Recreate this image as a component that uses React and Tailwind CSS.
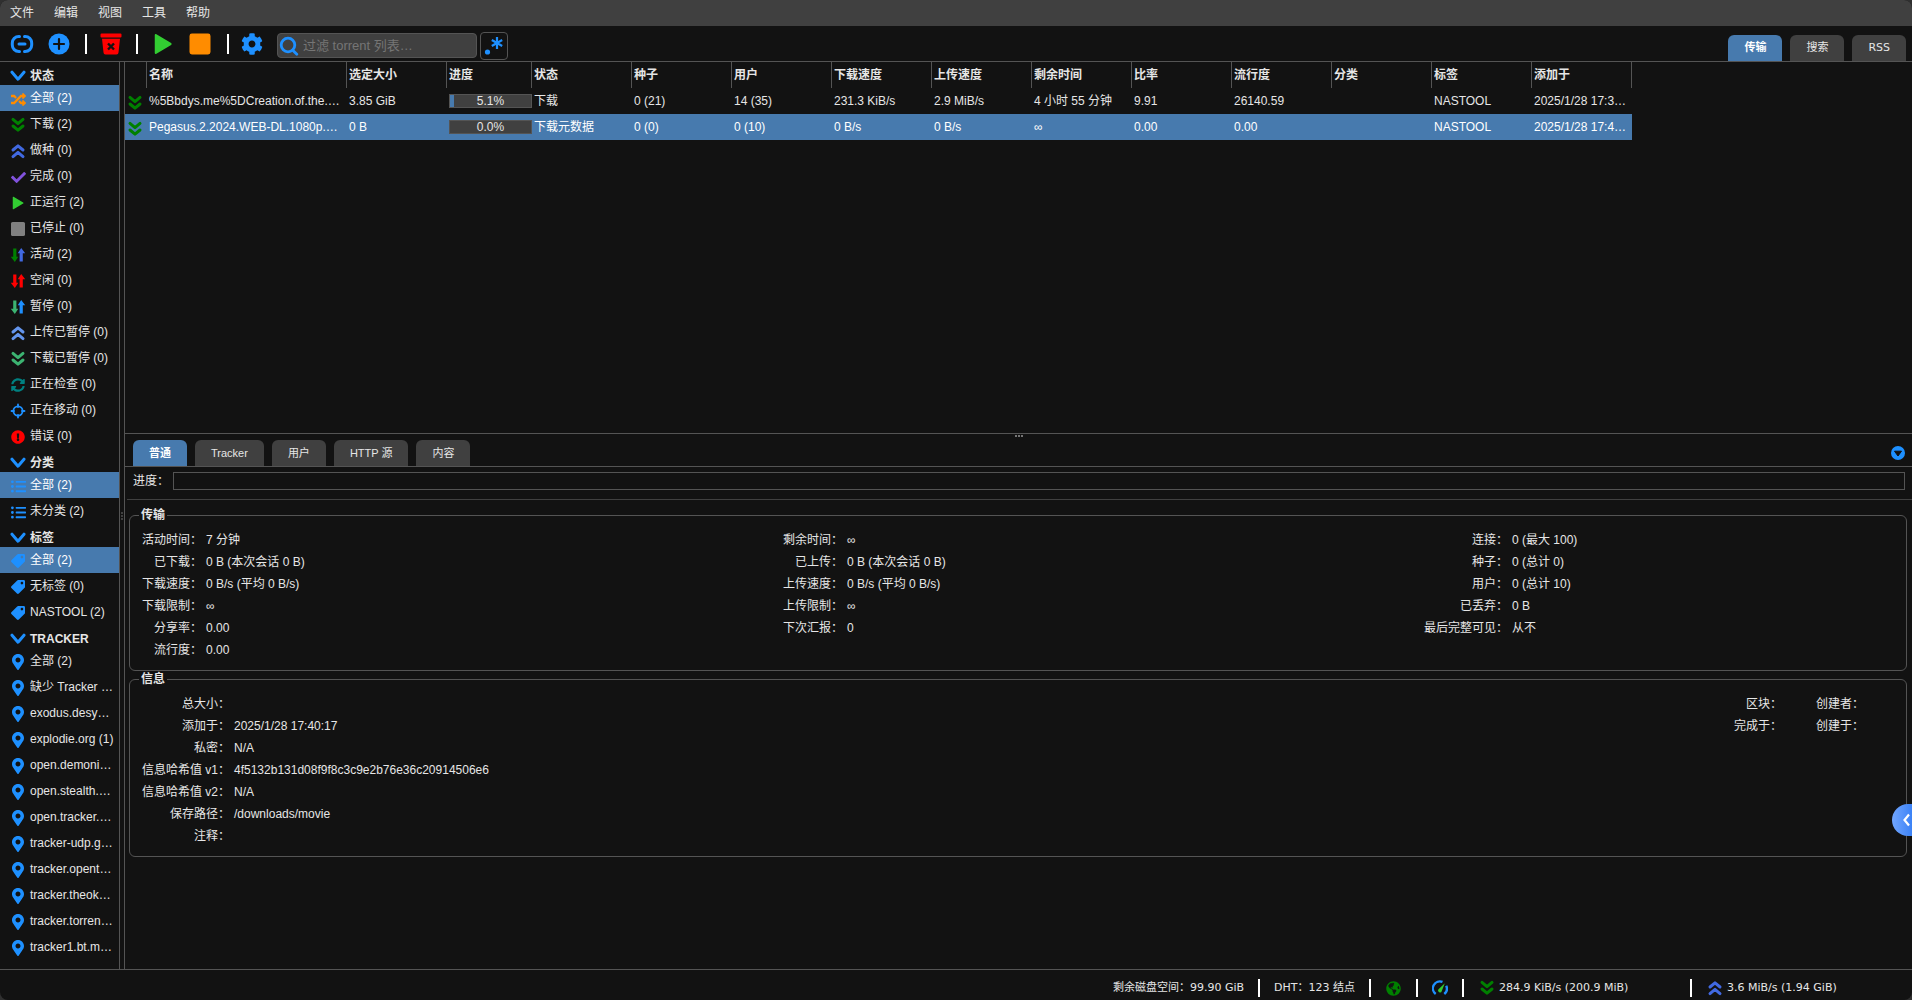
import { useState } from "react";
import clsx from "clsx";
import {
  FaCheck,
  FaCog,
  FaExclamationCircle,
  FaGlobeAmericas,
  FaListUl,
  FaMapMarkerAlt,
  FaRandom,
  FaSyncAlt,
  FaTag,
} from "react-icons/fa";

function Chevron() {
  return (
    <svg viewBox="0 0 16 16" className="size-4 shrink-0 text-[#1e90ff]" fill="none" stroke="currentColor" strokeWidth="3">
      <path d="M2 4.2 8 11.2l6-7" strokeLinecap="round" strokeLinejoin="round" />
    </svg>
  );
}

function DoubleDown({ className }) {
  return (
    <svg viewBox="0 0 16 16" className={clsx("size-4 shrink-0", className)} fill="none" stroke="currentColor" strokeWidth="3">
      <path d="M3 2.4 8 6.6l5-4.2M3 9l5 4.2L13 9" strokeLinecap="round" strokeLinejoin="round" />
    </svg>
  );
}

function DoubleUp({ className }) {
  return (
    <svg viewBox="0 0 16 16" className={clsx("size-4 shrink-0", className)} fill="none" stroke="currentColor" strokeWidth="3">
      <path d="M3 7 8 2.8 13 7M3 13.6 8 9.4l5 4.2" strokeLinecap="round" strokeLinejoin="round" />
    </svg>
  );
}

function Play({ className }) {
  return (
    <svg viewBox="0 0 16 16" className={clsx("shrink-0", className)} fill="currentColor">
      <path d="M2 1.4c0-.5.5-.8.9-.6l11 6.5c.5.3.5 1.100 0 1.400l-11 6.500c-.4.2-.9-.1-.9-.6z" />
    </svg>
  );
}

function Square({ className }) {
  return (
    <svg viewBox="0 0 16 16" className={clsx("shrink-0", className)} fill="currentColor">
      <rect x="1" y="1" width="14" height="14" rx="1.6" />
    </svg>
  );
}

function UpDown({ down, up }) {
  return (
    <svg viewBox="0 0 16 16" className="size-4 shrink-0">
      <path className={down} fill="currentColor" d="M3.2 1.500h3.200v8.300h1.900L4.800 15 .8 9.800h2.400z" />
      <path className={up} fill="currentColor" d="M9.600 14.500h3.200V6.200h2.400L11.200 1 7.700 6.200h1.900z" />
    </svg>
  );
}

function Crosshair() {
  return (
    <svg viewBox="0 0 16 16" className="size-4 shrink-0 text-[#1e90ff]" fill="none" stroke="currentColor" strokeWidth="1.8">
      <circle cx="8" cy="8" r="4.6" />
      <path d="M8 1.500v2.500M8 12v2.500M1.500 8h2.500M12 8h2.500" strokeLinecap="round" />
    </svg>
  );
}

function Link() {
  return (
    <svg viewBox="0 0 24 24" className="size-6" fill="none" stroke="#1e90ff" strokeWidth="3">
      <path d="M9.500 4.500H8.800a6.500 6.500 0 0 0-6.500 6.500v2a6.500 6.500 0 0 0 6.500 6.500h.7M14.500 4.500h.7a6.500 6.500 0 0 1 6.500 6.500v2a6.500 6.500 0 0 1-6.500 6.500h-.7M9 12h6" strokeLinecap="round" />
    </svg>
  );
}

function AddCircle() {
  return (
    <svg viewBox="0 0 22 22" className="size-[22px]">
      <circle cx="11" cy="11" r="10.5" fill="#1e90ff" />
      <path d="M11 6v10M6 11h10" stroke="#121212" strokeWidth="2.2" strokeLinecap="round" />
    </svg>
  );
}

function Trash() {
  return (
    <svg viewBox="0 0 22 22" className="size-[22px]">
      <path d="M1.500.5h19a1 1 0 0 1 1 1v2a1 1 0 0 1-1 1h-19a1 1 0 0 1-1-1v-2a1 1 0 0 1 1-1z" fill="red" />
      <path d="M2 5.800h18l-1.500 13.700a2 2 0 0 1-2 1.900h-11a2 2 0 0 1-2-1.900z" fill="red" />
      <path d="m8 10.500 6 6M14 10.500l-6 6" stroke="#121212" strokeWidth="2.4" />
    </svg>
  );
}

function Search() {
  return (
    <svg viewBox="0 0 20 20" className="size-5 shrink-0" fill="none" stroke="#1e90ff" strokeWidth="2.8" strokeLinecap="round">
      <circle cx="9" cy="9" r="6.8" />
      <path d="m14 14.500 3.800 3.800" />
    </svg>
  );
}

function Regex() {
  return (
    <svg viewBox="0 0 20 20" className="size-5">
      <circle cx="3.5" cy="16" r="2.6" fill="#1e90ff" />
      <path d="M13 1v12M7.800 4l10.400 6M18.200 4 7.800 10" stroke="#1e90ff" strokeWidth="2.2" />
    </svg>
  );
}

function Gauge() {
  return (
    <svg viewBox="0 0 16 16" className="size-4" fill="none">
      <path d="M3.700 14A7 7 0 0 1 10.500 1.900M12.300 14a7 7 0 0 0 1.900-8.300" stroke="#1e90ff" strokeWidth="2.4" />
      <path d="M12.800 3.200 9.800 11a1.900 1.900 0 1 1-3.500-1.400z" fill="#32cd32" />
    </svg>
  );
}

function Collapse() {
  return (
    <svg viewBox="0 0 14 14" className="size-[14px]">
      <circle cx="7" cy="7" r="7" fill="#1e90ff" />
      <path d="M3.500 5.200h7L7 10z" fill="#121212" stroke="#121212" strokeLinejoin="round" />
    </svg>
  );
}

const pin = <FaMapMarkerAlt className="size-4 text-[#1e90ff]" />;
const tag = <FaTag className="size-[14px] -scale-x-100 text-[#1e90ff]" />;
const list = <FaListUl className="size-[15px] text-[#1e90ff]" />;

const sections = [
  {
    title: "状态",
    selected: 0,
    items: [
      ["全部 (2)", <FaRandom className="size-[15px] text-[#ff8c00]" />],
      ["下载 (2)", <DoubleDown className="text-[#008000]" />],
      ["做种 (0)", <DoubleUp className="text-[#4169e1]" />],
      ["完成 (0)", <FaCheck className="size-[15px] text-[#8152dc]" />],
      ["正运行 (2)", <Play className="size-[14px] text-[#32cd32]" />],
      ["已停止 (0)", <Square className="size-4 text-[#808080]" />],
      ["活动 (2)", <UpDown down="text-[#008000]" up="text-[#4169e1]" />],
      ["空闲 (0)", <UpDown down="text-[#ff0000]" up="text-[#ff0000]" />],
      ["暂停 (0)", <UpDown down="text-[#3cb371]" up="text-[#1e90ff]" />],
      ["上传已暂停 (0)", <DoubleUp className="text-[#6495ed]" />],
      ["下载已暂停 (0)", <DoubleDown className="text-[#3cb371]" />],
      ["正在检查 (0)", <FaSyncAlt className="size-[14px] text-[#008080]" />],
      ["正在移动 (0)", <Crosshair />],
      ["错误 (0)", <FaExclamationCircle className="size-[14px] text-[#ff0000]" />],
    ],
  },
  { title: "分类", selected: 0, items: [["全部 (2)", list], ["未分类 (2)", list]] },
  { title: "标签", selected: 0, items: [["全部 (2)", tag], ["无标签 (0)", tag], ["NASTOOL (2)", tag]] },
  {
    title: "TRACKER",
    selected: -1,
    items: [
      "全部 (2)",
      "缺少 Tracker …",
      "exodus.desy…",
      "explodie.org (1)",
      "open.demoni…",
      "open.stealth.…",
      "open.tracker.…",
      "tracker-udp.g…",
      "tracker.opent…",
      "tracker.theok…",
      "tracker.torren…",
      "tracker1.bt.m…",
    ].map((name) => [name, pin]),
  },
];

const columns = ["名称", "选定大小", "进度", "状态", "种子", "用户", "下载速度", "上传速度", "剩余时间", "比率", "流行度", "分类", "标签", "添加于"];

const torrents = [
  {
    name: "%5Bbdys.me%5DCreation.of.the.…",
    size: "3.85 GiB",
    progress: 5.1,
    rest: ["下载", "0 (21)", "14 (35)", "231.3 KiB/s", "2.9 MiB/s", "4 小时 55 分钟", "9.91", "26140.59", "", "NASTOOL", "2025/1/28 17:3…"],
  },
  {
    name: "Pegasus.2.2024.WEB-DL.1080p.…",
    size: "0 B",
    progress: 0,
    rest: ["下载元数据", "0 (0)", "0 (10)", "0 B/s", "0 B/s", "∞", "0.00", "0.00", "", "NASTOOL", "2025/1/28 17:4…"],
  },
];

const transfer = [
  ["活动时间", "7 分钟", "剩余时间", "∞", "连接", "0 (最大 100)"],
  ["已下载", "0 B (本次会话 0 B)", "已上传", "0 B (本次会话 0 B)", "种子", "0 (总计 0)"],
  ["下载速度", "0 B/s (平均 0 B/s)", "上传速度", "0 B/s (平均 0 B/s)", "用户", "0 (总计 10)"],
  ["下载限制", "∞", "上传限制", "∞", "已丢弃", "0 B"],
  ["分享率", "0.00", "下次汇报", "0", "最后完整可见", "从不"],
  ["流行度", "0.00", "", "", "", ""],
];

const info = [
  ["总大小", "", "区块", "", "创建者", ""],
  ["添加于", "2025/1/28 17:40:17", "完成于", "", "创建于", ""],
  ["私密", "N/A", "", "", "", ""],
  ["信息哈希值 v1", "4f5132b131d08f9f8c3c9e2b76e36c20914506e6", "", "", "", ""],
  ["信息哈希值 v2", "N/A", "", "", "", ""],
  ["保存路径", "/downloads/movie", "", "", "", ""],
  ["注释", "", "", "", "", ""],
];

function Facts({ title, rows, cols }) {
  return (
    <fieldset className="min-w-0 rounded-md border border-[#545454] px-2 pt-[6px] pb-[9px]">
      <legend className="ml-px px-[2px] font-bold leading-4">{title}</legend>
      <dl className={clsx("grid gap-x-1 px-1 leading-[22px]", cols)}>
        {rows.map((row) =>
          row.map((text, i) =>
            i % 2 === 0 ? (
              <dt key={i} className="text-right whitespace-nowrap">{text && `${text}：`}</dt>
            ) : (
              <dd key={i} className="whitespace-nowrap">{text}</dd>
            )
          )
        )}
      </dl>
    </fieldset>
  );
}

function Tab({ active, onClick, children }) {
  return (
    <button
      role="tab"
      aria-selected={active}
      onClick={onClick}
      className={clsx("h-[26px] rounded-t-md px-4 text-[11px]", active ? "bg-[#477aae] font-bold text-white" : "bg-[#404040]")}
    >
      {children}
    </button>
  );
}

function Separator() {
  return <span className="h-5 w-[2px] bg-white" />;
}

export default function App() {
  const [view, setView] = useState("传输");
  const [panel, setPanel] = useState("普通");
  const [selected, setSelected] = useState(1);

  return (
    <div className="bg-[#303030]">
      <div className="flex min-h-screen flex-col overflow-hidden rounded-lg bg-[#121212] font-['Liberation_Sans','Noto_Sans_CJK_SC',sans-serif] text-xs text-[#e6e6e6]">
        <nav className="flex h-[26px] items-center gap-5 bg-[#404040] px-[10px]">
          {["文件", "编辑", "视图", "工具", "帮助"].map((item) => (
            <button key={item}>{item}</button>
          ))}
        </nav>

        <header className="flex h-9 items-center border-b border-[#545454] pl-[10px]">
          <div className="flex items-center">
            <button aria-label="添加链接"><Link /></button>
            <button aria-label="添加文件" className="ml-[14px] mr-[15px]"><AddCircle /></button>
            <Separator />
            <button aria-label="删除" className="ml-[13px] mr-[14px]"><Trash /></button>
            <Separator />
            <button aria-label="启动" className="mx-[14px]"><Play className="size-[22px] text-[#32cd32]" /></button>
            <button aria-label="停止" className="mr-[15px]"><Square className="size-6 text-[#ff8c00]" /></button>
            <Separator />
            <button aria-label="选项" className="ml-3 mr-[14px]"><FaCog className="size-[22px] text-[#1e90ff]" /></button>
            <label className="mt-1 flex h-[25px] w-[200px] items-center rounded-sm border border-[#545454] bg-[#404040] pl-[1px]">
              <Search />
              <input
                type="text"
                aria-label="过滤 torrent 列表"
                placeholder="过滤 torrent 列表…"
                className="min-w-0 flex-1 bg-transparent pl-1 text-[13px] outline-none placeholder:text-[#757575]"
              />
            </label>
            <button aria-label="使用正则表达式" className="mt-1 ml-[3px] flex size-7 items-center justify-center rounded-sm border border-[#545454]">
              <Regex />
            </button>
          </div>
          <div role="tablist" className="ml-auto flex gap-2 self-end pr-[6px] font-['DejaVu_Sans','Noto_Sans_CJK_SC',sans-serif]">
            {["传输", "搜索", "RSS"].map((name) => (
              <Tab key={name} active={view === name} onClick={() => setView(name)}>{name}</Tab>
            ))}
          </div>
        </header>

        <div className="flex flex-1">
          <aside className="w-[120px] shrink-0 border-r border-[#545454]">
            {sections.map((section) => (
              <section key={section.title}>
                <button className="flex h-[23px] w-full items-center gap-1 pt-[5px] pl-[10px] font-bold">
                  <Chevron />
                  {section.title}
                </button>
                <ul>
                  {section.items.map(([name, icon], i) => (
                    <li key={name}>
                      <button
                        className={clsx(
                          "flex h-[26px] w-full items-center gap-1 pl-[10px] whitespace-nowrap",
                          i === section.selected && "bg-[#477aae] text-white"
                        )}
                      >
                        <span className="flex w-4 shrink-0 justify-center pt-[2px]">{icon}</span>
                        {name}
                      </button>
                    </li>
                  ))}
                </ul>
              </section>
            ))}
          </aside>

          <div className="flex w-1 shrink-0 cursor-col-resize flex-col items-center justify-center gap-px">
            <span className="size-[2px] bg-[#404040]" />
            <span className="size-[2px] bg-[#404040]" />
            <span className="size-[2px] bg-[#404040]" />
          </div>

          <main className="flex min-w-0 flex-1 flex-col border-l border-[#545454]">
            <div className="flex-1 overflow-x-auto">
              <table className="w-[1507px] table-fixed border-separate border-spacing-0">
                <colgroup>
                  <col className="w-[22px]" />
                  <col className="w-[200px]" />
                  <col className="w-[100px]" />
                  <col className="w-[85px]" />
                  {columns.slice(3).map((name) => (
                    <col key={name} className="w-[100px]" />
                  ))}
                </colgroup>
                <thead>
                  <tr className="h-[26px] text-left">
                    <th className="border-r border-[#545454]" aria-label="状态图标" />
                    {columns.map((name) => (
                      <th key={name} className="border-r border-[#545454] px-[2px]">{name}</th>
                    ))}
                  </tr>
                </thead>
                <tbody>
                  {torrents.map((torrent, i) => (
                    <tr
                      key={torrent.name}
                      onClick={() => setSelected(i)}
                      className={clsx("h-[26px] whitespace-nowrap", selected === i && "bg-[#477aae] text-white")}
                    >
                      <td className="pt-[3px] pl-[2px]"><DoubleDown className="text-[#008000]" /></td>
                      <td className="px-[2px]">{torrent.name}</td>
                      <td className="px-[2px]">{torrent.size}</td>
                      <td className="pl-[2px]">
                        <div className="relative h-[14px] border border-[#545454] bg-[#404040] text-center leading-3 text-[#e6e6e6]">
                          <div className="absolute inset-y-0 left-0 bg-[#477aae]" style={{ width: `${torrent.progress}%` }} />
                          <span className="relative">{torrent.progress.toFixed(1)}%</span>
                        </div>
                      </td>
                      {torrent.rest.map((text, n) => (
                        <td key={n} className="px-[2px]">{text}</td>
                      ))}
                    </tr>
                  ))}
                </tbody>
              </table>
            </div>

            <section className="border-t border-[#545454] pb-28">
              <div className="flex h-[6px] cursor-row-resize justify-center gap-px pt-px">
                <span className="size-[2px] bg-[#757575]" />
                <span className="size-[2px] bg-[#757575]" />
                <span className="size-[2px] bg-[#757575]" />
              </div>
              <div className="flex items-center border-b border-[#545454] pr-[7px] pl-2">
                <div role="tablist" className="flex gap-2">
                  {["普通", "Tracker", "用户", "HTTP 源", "内容"].map((name) => (
                    <Tab key={name} active={panel === name} onClick={() => setPanel(name)}>{name}</Tab>
                  ))}
                </div>
                <button aria-label="折叠" className="ml-auto"><Collapse /></button>
              </div>

              <div className="flex items-center gap-1 py-[5px] pr-[7px] pl-2">
                <span>进度：</span>
                <div className="h-[18px] flex-1 border border-[#545454]" />
              </div>
              <div className="mt-1 mb-[7px] ml-[2px] border-t border-[#404040]" />

              <div className="pr-[5px] pl-1">
                <Facts title="传输" rows={transfer} cols="grid-cols-[auto_3fr_auto_3fr_auto_2fr]" />
                <Facts title="信息" rows={info} cols="grid-cols-[auto_1fr_auto_26px_auto_26px]" />
              </div>
            </section>
          </main>
        </div>

        <footer className="flex h-[31px] items-center justify-end border-t border-[#545454] pt-[6px] font-['DejaVu_Sans','Noto_Sans_CJK_SC',sans-serif] text-[11px]">
          <div className="flex h-[18px] items-center whitespace-nowrap">
            <span className="px-[14px]">剩余磁盘空间：99.90 GiB</span>
            <span className="h-full w-[2px] bg-white" />
            <span className="px-[14px]">DHT：123 结点</span>
            <span className="h-full w-[2px] bg-white" />
            <button aria-label="连接状态" className="px-[15px]"><FaGlobeAmericas className="size-[15px] text-[#008000]" /></button>
            <span className="h-full w-[2px] bg-white" />
            <button aria-label="备用速度限制" className="px-[14px]"><Gauge /></button>
            <span className="h-full w-[2px] bg-white" />
            <button className="flex h-full w-[226px] items-center gap-1 pl-[15px]">
              <DoubleDown className="text-[#008000]" />
              284.9 KiB/s (200.9 MiB)
            </button>
            <span className="h-full w-[2px] bg-white" />
            <button className="flex h-full w-[220px] items-center gap-1 pl-[15px]">
              <DoubleUp className="text-[#4169e1]" />
              3.6 MiB/s (1.94 GiB)
            </button>
          </div>
        </footer>
      </div>

      <button
        aria-label="展开侧栏"
        className="fixed right-0 bottom-[164px] flex h-8 w-5 items-center justify-end rounded-l-full bg-linear-to-r from-[#71a6ff] to-[#3b82f6]"
      >
        <svg viewBox="0 0 10 14" className="h-[14px] w-[10px]" fill="none" stroke="white" strokeWidth="2.2">
          <path d="M7 1.500 2.500 7 7 12.500" />
        </svg>
      </button>
    </div>
  );
}
